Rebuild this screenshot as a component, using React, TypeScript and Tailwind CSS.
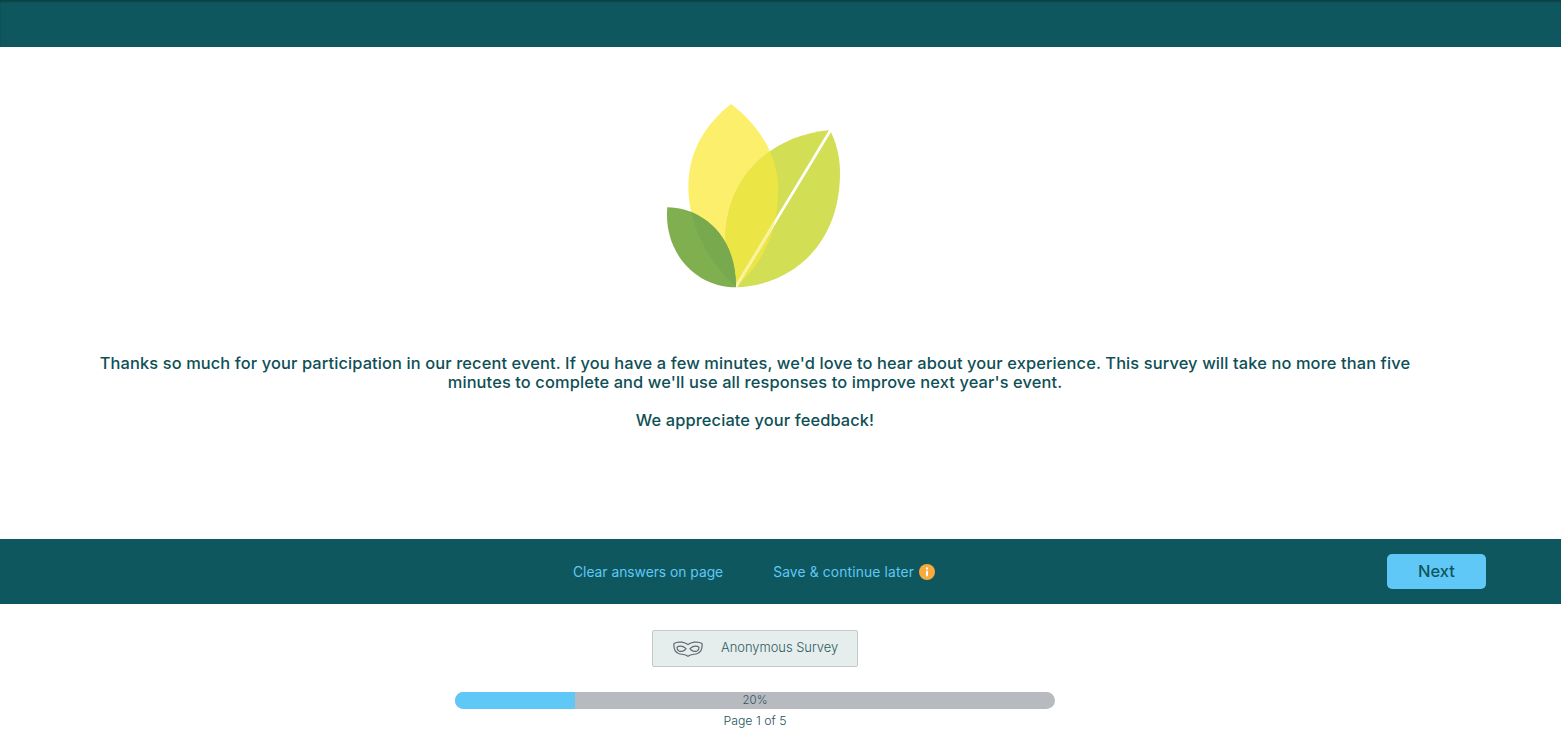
const yellowLeaf =
  'M243 42C170 100 115 180 115 290C115 420 190 530 258 590C340 520 385 420 385 300C385 190 320 100 243 42Z'
const limeLeaf =
  'M540 120C565 170 570 215 570 250C570 455 435 585 258 592C235 530 222 470 228 410C245 250 370 135 540 120Z'
const greenLeaf = 'M52 352C140 352 258 420 258 592C130 592 40 480 52 352Z'

const Logo = () => (
  <svg width="200" height="210" viewBox="0 0 600 630" className="block">
    <defs>
      <clipPath id="clip-yellow">
        <path d={yellowLeaf} />
      </clipPath>
    </defs>
    <path d={yellowLeaf} fill="#fcef6b" />
    <path d={limeLeaf} fill="#d2de53" />
    <path d={limeLeaf} fill="#ebe545" clipPath="url(#clip-yellow)" />
    <path d="M542 120L258 590" stroke="#ffffff" strokeWidth="8" />
    <path d="M542 120L258 590" stroke="#f8f39a" strokeWidth="8" clipPath="url(#clip-yellow)" />
    <path d={greenLeaf} fill="#80af50" />
    <path d={greenLeaf} fill="#78a94e" clipPath="url(#clip-yellow)" />
  </svg>
)

const MaskIcon = () => (
  <svg width="30" height="16" viewBox="0 0 30 16" fill="none" stroke="#5f6b6d" strokeWidth="1.2" className="block">
    <path d="M1 2.5C3 1.2 6 0.8 9 1.2C11.5 1.6 13.5 2.6 15 3.6C16.5 2.6 18.5 1.6 21 1.2C24 0.8 27 1.2 29 2.5C29.5 7 28 11 24.5 12.5C21.5 13.6 18 13 15 15.2C12 13 8.5 13.6 5.5 12.5C2 11 0.5 7 1 2.5Z" />
    <path d="M4 6.2C6 4.4 10 4.6 13 7.6C11.5 10.2 8 11 6 10C4.6 9.2 4 7.6 4 6.2Z" />
    <path d="M26 6.2C24 4.4 20 4.6 17 7.6C18.5 10.2 22 11 24 10C25.4 9.2 26 7.6 26 6.2Z" />
  </svg>
)

const InfoBadge = () => (
  <span className="flex h-4 w-4 items-center justify-center rounded-full bg-[#f9aa3c]">
    <svg width="4" height="10" viewBox="0 0 4 10" fill="#ffffff" className="block">
      <rect x="1" y="0.5" width="2" height="2" />
      <rect x="1" y="3.8" width="2" height="5.5" />
    </svg>
  </span>
)

export default function App() {
  return (
    <div className="min-h-[745px] w-full bg-white font-['Inter',sans-serif] text-[#0f575e]">
      <div className="h-[47px] bg-[#0f575e] shadow-[inset_0_2px_2px_rgba(0,0,0,0.25)]" />

      <main className="h-[492px] w-[1510px] pt-[46px]">
        <div className="flex justify-center">
          <div className="ml-[-10px] mb-[-13px] mt-[-3px]">
            <Logo />
          </div>
        </div>
        <div className="mx-auto mt-[67px] w-[1340px] text-center text-[16.4px] leading-[19px] font-medium tracking-[0.12px] text-[#0f4f56]">
          <p>
            Thanks so much for your participation in our recent event. If you have a few minutes, we'd love to hear about your experience. This survey will take no more than five minutes to complete and we'll use all responses to improve next year's event.
          </p>
          <p className="mt-[19px]">We appreciate your feedback!</p>
        </div>
      </main>

      <footer className="h-[65px] bg-[#0f575e]">
        <div className="relative flex h-full w-[1510px] items-center justify-center gap-[50px] pr-[2px] text-[13.8px] text-[#5fc8f6]">
          <a className="mt-[1px]">Clear answers on page</a>
          <span className="flex items-center gap-[5px]">
            <a className="mt-[1px] tracking-[0.15px]">Save &amp; continue later</a>
            <InfoBadge />
          </span>
          <button className="absolute right-[24px] top-[15px] h-[35px] w-[99px] rounded-[5px] bg-[#5fc8f6] text-[16.5px] font-medium text-[#0f575e]">
            Next
          </button>
        </div>
      </footer>

      <div className="flex w-[1510px] flex-col items-center pt-[26px]">
        <div className="flex h-[37px] w-[206px] items-center rounded-[2px] border border-[#c4c9c9] bg-[#e5eeec] pl-[20px] text-[12.9px] font-light leading-[17px] text-[#2f5a62]">
          <MaskIcon />
          <span className="ml-[18px] mt-[-2px]">Anonymous Survey</span>
        </div>
        <div className="relative mt-[25px] h-[17px] w-[600px] overflow-hidden rounded-full bg-[#b7babf]">
          <div className="h-full w-[20%] bg-[#5fc8f6]" />
          <span className="absolute inset-0 flex items-center justify-center text-[11.5px] font-light text-[#2f5560]">20%</span>
        </div>
        <p className="mt-[3px] text-[12.3px] leading-[17px] font-light text-[#1f5560]">Page 1 of 5</p>
      </div>
    </div>
  )
}
